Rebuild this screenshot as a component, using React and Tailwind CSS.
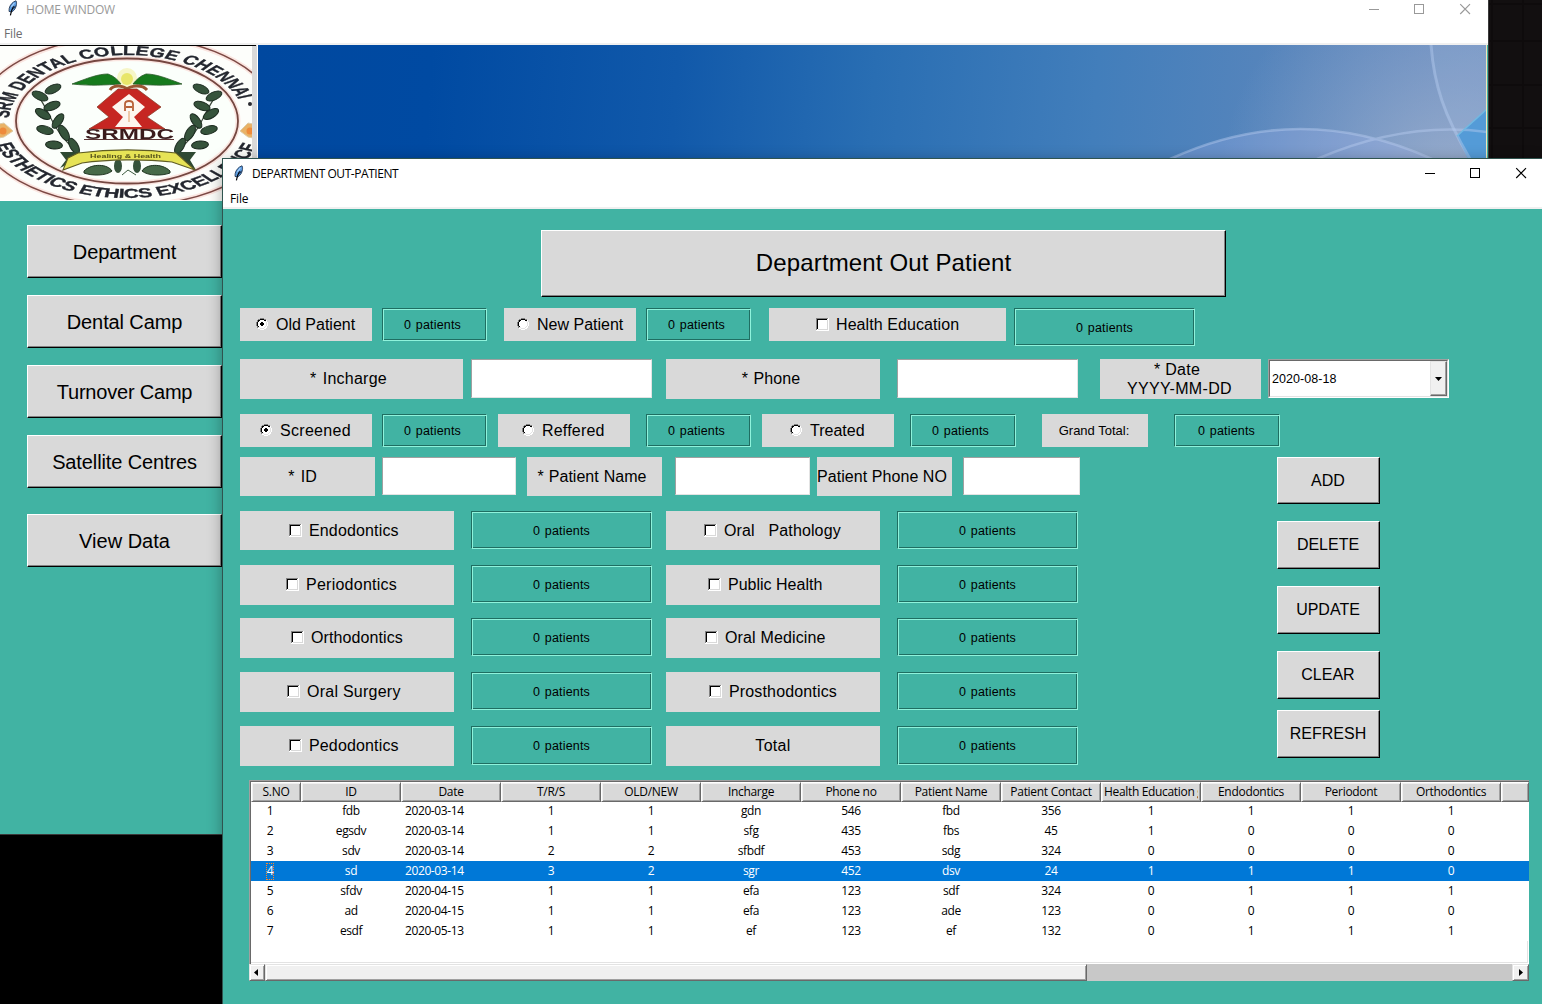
import React from "react";

const ARIAL = "font-['Liberation_Sans',Arial,sans-serif]";
const SEGOE = "font-['Open_Sans','Noto_Sans',sans-serif]";

function Feather() {
  return (
    <svg width="12" height="16" viewBox="0 0 12 16">
      <path d="M9 0.8C6 1.6 2.8 5 2.2 8.4L2 11.4L4.6 12C7.6 10.4 9.2 7.4 9.5 4.4C9.6 2.8 9.6 1.4 9 0.8Z" fill="#5a9be0" stroke="#1b2b45" strokeWidth="0.8" />
      <path d="M6.6 6.4C5.2 8.6 4 11.6 3.4 15.4" fill="none" stroke="#05070c" strokeWidth="1.2" />
      <path d="M6.6 8.6L8.4 5.8" stroke="#15233c" strokeWidth="1" />
      <path d="M4.4 6.8L7.4 2.8" stroke="#a9d2fb" strokeWidth="1.1" />
    </svg>
  );
}

function WindowControls({ color }) {
  return (
    <svg width="104" height="12" viewBox="0 0 104 12" shapeRendering="crispEdges" fill="none" stroke={color}>
      <path d="M0 6.5H10" />
      <rect x="45.5" y="1.5" width="9" height="9" />
      <path d="M91.2 1.2L101 11M101 1.2L91.2 11" shapeRendering="auto" strokeWidth="1.15" />
    </svg>
  );
}

function Emblem() {
  const leaves = [
    [53, 89, -25], [40, 96, 25], [52, 106, -20], [43, 114, 30], [58, 121, -55], [45, 130, 15],
    [64, 133, 60], [54, 145, 5], [74, 146, 60],
  ];
  return (
    <svg width="252" height="154" viewBox="0 46 252 154" className="block bg-[#fdfefb]">
      <defs>
        <path id="arcTop" d="M-66 0A66 66 0 0 1 66 0" />
        <path id="arcBottom" d="M-77 0A77 77 0 0 0 77 0" />
        <filter id="soft"><feGaussianBlur stdDeviation="0.5" /></filter>
      </defs>
      <g filter="url(#soft)">
        <ellipse cx="127" cy="121" rx="152" ry="85" fill="none" stroke="#fbe6e1" strokeWidth="5" />
        <ellipse cx="127" cy="121" rx="152" ry="85" fill="none" stroke="#7d4a45" strokeWidth="1.5" />
        <ellipse cx="127" cy="121" rx="111" ry="62.5" fill="#fbfffb" stroke="#fbe6e1" strokeWidth="5" />
        <ellipse cx="127" cy="121" rx="111" ry="62.5" fill="none" stroke="#744640" strokeWidth="1.8" />
        <g transform="translate(127 121) scale(1.79 1)" className="font-['Liberation_Sans',Arial,sans-serif] font-bold" fill="#23262e" stroke="#23262e" strokeWidth="0.3">
          <text fontSize="13">
            <textPath href="#arcTop" startOffset="3" textLength="182" lengthAdjust="spacingAndGlyphs">SRM DENTAL COLLEGE CHENNAI</textPath>
          </text>
          <text fontSize="13">
            <textPath href="#arcBottom" startOffset="24" textLength="193" lengthAdjust="spacingAndGlyphs">ESTHETICS ETHICS EXCELLENCE</textPath>
          </text>
        </g>
        <circle cx="250" cy="104" r="2" fill="#2a2a30" />
        <path d="M-6 125L4 123L13 131L4 137L-6 139Z M258 125L248 123L240 131L248 137L258 139Z" fill="#e9b266" stroke="#dca" />
        <circle cx="3" cy="131" r="3.5" fill="#ee8a3a" /><circle cx="250" cy="131" r="3.5" fill="#ee8a3a" />
        {[false, true].map((flip) => (
          <g key={String(flip)} transform={flip ? "translate(254 0) scale(-1 1)" : undefined}>
            <path d="M36 93C50 110 52 132 78 152" fill="none" stroke="#3d4a3c" strokeWidth="1.2" />
            {leaves.map(([x, y, r]) => (
              <ellipse key={`${x}-${y}`} cx={x} cy={y} rx="8.5" ry="4" transform={`rotate(${r} ${x} ${y})`} fill="#35523a" stroke="#1c2b20" />
            ))}
          </g>
        ))}
        <circle cx="127" cy="78" r="10" fill="#f6f6c8" /><circle cx="127" cy="79" r="6" fill="#e8e66a" />
        <path d="M72 84C88 78 98 74 108 74C114 76 118 80 121 84C106 85 90 86 72 84Z M182 84C166 78 156 74 146 74C140 76 136 80 133 84C148 85 164 86 182 84Z" fill="#157a1c" stroke="#2f5a2c" strokeWidth="0.8" />
        <path d="M110 90C114 84 124 86 127 89C130 86 142 84 147 90" fill="none" stroke="#9a5730" strokeWidth="3" />
        <path d="M118 89H137L161 107L147 117L165 129H89L109 117L97 107Z" fill="#c62822" stroke="#8d3b2a" strokeWidth="0.8" />
        <path d="M129 94L145 107L134 117L142 127H115L123 117L112 107Z" fill="#fdf6f0" />
        <path d="M125 111V104Q125 101 129 101Q133 101 133 104V111M126 107H132" fill="none" stroke="#b86038" strokeWidth="1.8" />
        <path d="M129 111V122" stroke="#eec9a8" strokeWidth="2" />
        <text x="85" y="138.5" textLength="89" lengthAdjust="spacingAndGlyphs" fontSize="14" className="font-['Liberation_Sans',Arial,sans-serif] font-bold" fill="#3a1c1f">SRMDC</text>
        <path d="M84 139.5H174" stroke="#5b3434" />
        <path d="M84 171C92 163 108 164 112 171C106 176 92 176 84 173Z M170 171C162 163 146 164 142 171C148 176 162 176 170 173Z" fill="#476b49" stroke="#213522" />
        <ellipse cx="118" cy="166" rx="4" ry="7" fill="#36523a" /><ellipse cx="137" cy="166" rx="4" ry="7" fill="#36523a" />
        <path d="M122 175L128 170L136 175" fill="none" stroke="#3d5b40" />
        <path d="M60 152H80L76 160L60 168L66 160ZM196 152H176L180 160L196 170L190 160Z" fill="#2e4a31" />
        <path d="M78 153C110 149 145 149 176 153L195 170L172 162C145 159 108 159 82 163L63 170L68 158Z" fill="#e6e356" stroke="#5f5c24" strokeWidth="1.1" />
        <text x="90" y="157.5" fontSize="5.5" textLength="71" lengthAdjust="spacingAndGlyphs" className="font-['Liberation_Sans',Arial,sans-serif] font-bold" fill="#55521a">Healing &amp; Health</text>
      </g>
    </svg>
  );
}

function Banner() {
  return (
    <svg width="1229" height="114" viewBox="258 45 1229 114" className="block">
      <defs>
        <linearGradient id="sky" gradientUnits="userSpaceOnUse" x1="258" y1="60" x2="1487" y2="150">
          <stop offset="0" stopColor="#00489f" />
          <stop offset="0.14" stopColor="#004aa2" />
          <stop offset="0.34" stopColor="#1159aa" />
          <stop offset="0.5" stopColor="#296eb3" />
          <stop offset="0.68" stopColor="#427ebb" />
          <stop offset="0.85" stopColor="#5a86bc" />
          <stop offset="1" stopColor="#6c8dc0" />
        </linearGradient>
        <radialGradient id="glow" gradientUnits="userSpaceOnUse" cx="1450" cy="185" r="230">
          <stop offset="0" stopColor="#b4bfd2" stopOpacity="0.65" />
          <stop offset="1" stopColor="#a0b4d6" stopOpacity="0" />
        </radialGradient>
      </defs>
      <path d="M258 45H1487V159H258Z" fill="url(#sky)" />
      <path d="M258 45H1487V159H258Z" fill="url(#glow)" />
      <path d="M1170 159Q1300 99 1432 159Z" fill="#9fb4ea" fillOpacity="0.3" />
      <path d="M1431 45C1434 85 1444 115 1457 136L1487 109V45Z" fill="#a9c0e6" fillOpacity="0.15" />
      <path d="M1487 109L1457 136L1468 159H1487Z" fill="#549bd7" />
      <path d="M1170 159Q1300 99 1432 159M1317 159Q1405 121 1487 132" fill="none" stroke="#b8cdf0" strokeOpacity="0.45" strokeWidth="2.5" />
      <path d="M1431 45C1434 85 1444 115 1470 159" fill="none" stroke="#b5cdf0" strokeOpacity="0.45" strokeWidth="3" />
      <path d="M1487 109L1457 136" stroke="#70b9e2" strokeWidth="1.5" />
      <path d="M1486.5 45V159" stroke="#f3e6b8" />
    </svg>
  );
}

function PushButton({ className = "", children }) {
  return (
    <button className={`${ARIAL} flex shrink-0 items-center justify-center whitespace-nowrap border border-t-white border-l-white border-r-black border-b-black bg-[#d9d9d9] text-black shadow-[inset_-1px_-1px_0_#828282] ${className}`}>
      {children}
    </button>
  );
}

function Count({ className = "" }) {
  return (
    <div className={`${ARIAL} flex shrink-0 items-center justify-center whitespace-nowrap border border-t-[#1f6e62] border-l-[#1f6e62] border-r-[#8ff3dc] border-b-[#8ff3dc] text-[12.5px] tracking-[0.18px] [word-spacing:1px] text-black shadow-[inset_1px_1px_0_#8ff3dc,inset_-1px_-1px_0_#1f6e62] ${className}`}>
      0 patients
    </div>
  );
}

function Label({ className = "", children }) {
  return (
    <div className={`${ARIAL} flex shrink-0 items-center justify-center whitespace-pre bg-[#d9d9d9] text-center text-[16px] leading-[19px] text-black ${className}`}>
      {children}
    </div>
  );
}

function Entry({ className = "" }) {
  return <div className={`shrink-0 border border-t-[#a0a0a0] border-l-[#a0a0a0] border-r-[#e3e3e3] border-b-[#e3e3e3] bg-white ${className}`} />;
}

function Radio({ label, on, className = "" }) {
  return (
    <div className={`${ARIAL} flex h-[33px] w-[132px] shrink-0 items-center gap-2 whitespace-nowrap bg-[#d9d9d9] text-[16px] text-black ${className}`}>
      <svg width="12" height="12" viewBox="0 0 12 12" shapeRendering="crispEdges" className="mb-px shrink-0">
        <path d="M4 0H8V1H10V2H11V4H12V8H11V10H10V11H8V12H4V11H2V10H1V8H0V4H1V2H2V1H4Z" fill="#fff" />
        <path d="M4 0H8V1H4ZM2 1H4V2H2ZM8 1H10V2H8ZM1 2H2V4H1ZM0 4H1V8H0ZM1 8H2V10H1Z" fill="#828282" />
        <path d="M4 1H8V2H4ZM2 2H4V3H2ZM8 2H10V3H8ZM2 3H3V4H2ZM1 4H2V8H1ZM2 8H3V9H2Z" fill="#000" />
        <path d="M9 3H10V4H9ZM10 4H11V8H10ZM9 8H10V9H9ZM8 9H9V10H8ZM4 10H8V11H4ZM2 9H4V10H2Z" fill="#e3e3e3" />
        {on && <path d="M5 4H7V5H8V7H7V8H5V7H4V5H5Z" fill="#000" />}
      </svg>
      {label}
    </div>
  );
}

function Check({ label, className = "" }) {
  return (
    <div className={`${ARIAL} flex shrink-0 items-center gap-[7px] whitespace-pre bg-[#d9d9d9] text-[16px] text-black ${className}`}>
      <svg width="13" height="13" viewBox="0 0 13 13" shapeRendering="crispEdges" className="mb-px shrink-0">
        <rect width="13" height="13" fill="#fff" />
        <path d="M0.5 12V0.5H12" fill="none" stroke="#828282" />
        <path d="M1.5 11V1.5H11" fill="none" stroke="#000" />
        <path d="M2 11.5H11.5V2" fill="none" stroke="#d9d9d9" />
      </svg>
      <span>{label}</span>
    </div>
  );
}

const departments = [
  { a: "Endodontics", ap: "pl-[49px] tracking-[0.15px]", b: "Oral   Pathology", bp: "pl-[38px] tracking-[0.13px]", row: "mt-[15px]", h: "h-[39px]", bh: "h-[38px]" },
  { a: "Periodontics", ap: "pl-[46px] tracking-[0.25px]", b: "Public Health", bp: "pl-[42px]", row: "mt-[15px]", h: "h-10", bh: "h-[38px]" },
  { a: "Orthodontics", ap: "pl-[51px] tracking-[0.1px]", b: "Oral Medicine", bp: "pl-[39px] tracking-[0.15px]", row: "mt-[13px]", h: "h-10", bh: "h-[38px]" },
  { a: "Oral Surgery", ap: "pl-[47px] tracking-[0.25px]", b: "Prosthodontics", bp: "pl-[43px] tracking-[0.15px]", row: "mt-[14px]", h: "h-10", bh: "h-[38px]" },
  { a: "Pedodontics", ap: "pl-[49px] tracking-[0.15px]", b: null, bp: "", row: "mt-[14px]", h: "h-10", bh: "h-[39px]" },
];

const columns = ["S.NO", "ID", "Date", "T/R/S", "OLD/NEW", "Incharge", "Phone no", "Patient Name", "Patient Contact", "Health Education g", "Endodontics", "Periodont", "Orthodontics", ""];

const records = [
  ["1", "fdb", "2020-03-14", "1", "1", "gdn", "546", "fbd", "356", "1", "1", "1", "1"],
  ["2", "egsdv", "2020-03-14", "1", "1", "sfg", "435", "fbs", "45", "1", "0", "0", "0"],
  ["3", "sdv", "2020-03-14", "2", "2", "sfbdf", "453", "sdg", "324", "0", "0", "0", "0"],
  ["4", "sd", "2020-03-14", "3", "2", "sgr", "452", "dsv", "24", "1", "1", "1", "0"],
  ["5", "sfdv", "2020-04-15", "1", "1", "efa", "123", "sdf", "324", "0", "1", "1", "1"],
  ["6", "ad", "2020-04-15", "1", "1", "efa", "123", "ade", "123", "0", "0", "0", "0"],
  ["7", "esdf", "2020-05-13", "1", "1", "ef", "123", "ef", "132", "0", "1", "1", "1"],
];

const GRID = "grid grid-cols-[50px_repeat(12,100px)_28px]";

function ScrollArrow({ d, className = "" }) {
  return (
    <div className={`flex h-[17px] shrink-0 items-center justify-center border border-t-[#e3e3e3] border-l-[#e3e3e3] border-r-[#696969] border-b-[#696969] bg-[#f0f0f0] shadow-[inset_1px_1px_0_#fff,inset_-1px_-1px_0_#a0a0a0] ${className}`}>
      <svg width="4" height="7" viewBox="0 0 4 7"><path d={d} fill="#000" /></svg>
    </div>
  );
}

function RecordsTable() {
  return (
    <div className="ml-[9px] mt-[14px] w-[1280px]">
      <div className="h-[184px] border-t border-l border-[#a0a0a0] bg-white">
        <div className={`${SEGOE} h-[183px] overflow-hidden border-t border-l border-[#696969] text-[12px] tracking-[-0.4px] text-black`}>
          <div className={`${GRID} h-[19px]`}>
            {columns.map((c, i) => (
              <div key={i} className="flex border border-t-white border-l-white border-r-[#696969] border-b-[#696969] bg-[#d9d9d9] shadow-[inset_1px_1px_0_#f0f0f0,inset_-1px_-1px_0_#a0a0a0]">
                <div className={`flex flex-1 items-center overflow-hidden whitespace-nowrap ${i === 9 ? "mr-[2px] pl-[2px] tracking-[-0.33px]" : "justify-center tracking-[-0.3px]"}`}>{c}</div>
              </div>
            ))}
          </div>
          {records.map((r, n) => (
            <div key={n} className={`${GRID} h-5 items-center text-center leading-5 ${n === 3 ? "bg-[#0078d7] text-white" : ""}`}>
              {r.map((v, i) => (
                <div key={i} className={i === 0 ? "flex justify-center pr-3" : i === 2 ? "pl-1 text-left" : ""}>
                  {n === 3 && i === 0 ? (
                    <span className="flex h-[17px] w-2 items-center justify-center border border-dotted border-[#ff8728]">{v}</span>
                  ) : v}
                </div>
              ))}
            </div>
          ))}
          <div className="mr-px h-[22px] border-b border-r border-[#e3e3e3]" />
        </div>
      </div>
      <div className="flex h-[17px] bg-[#c8c8c8]">
        <ScrollArrow d="M4 0V7L0 3.5Z" className="w-4 pr-[2px]" />
        <div className="w-[822px] border border-t-[#e3e3e3] border-l-[#e3e3e3] border-r-[#696969] border-b-[#696969] bg-[#f0f0f0] shadow-[inset_1px_1px_0_#fff,inset_-1px_-1px_0_#a0a0a0]" />
        <ScrollArrow d="M0 0V7L4 3.5Z" className="ml-auto w-[17px]" />
      </div>
    </div>
  );
}

function HomeWindow() {
  return (
    <div className="absolute left-0 top-0 flex h-[835px] w-[1489px] flex-col border-r border-b border-[#3a3a3a] bg-[#41b3a3]">
      <div className="flex h-[45px] flex-col border-b-2 border-[#f0f0f0] bg-white">
        <div className={`${SEGOE} flex h-[22px] items-start pl-[7px] text-[12px] text-[#999]`}>
          <Feather />
          <span className="ml-[7px] flex-1 leading-[19px] tracking-[-0.22px]">HOME WINDOW</span>
          <div className="mr-[15px] mt-[3px]"><WindowControls color="#999" /></div>
        </div>
        <div className={`${SEGOE} pl-1 pt-1 text-[12px] leading-[18px] tracking-[-0.15px] text-[#6d6d6d]`}>File</div>
      </div>
      <div className="flex h-[156px]">
        <div className="w-[258px] border-r border-b border-white bg-[#d9d9d9]">
          <div className="w-[256px] border-t border-black"><Emblem /></div>
        </div>
        <Banner />
      </div>
      <div className="ml-[27px] mt-6 flex w-[195px] flex-col gap-[17px] text-[20px] tracking-[-0.12px]">
        <PushButton className="h-[53px]">Department</PushButton>
        <PushButton className="h-[53px]">Dental Camp</PushButton>
        <PushButton className="h-[53px] !tracking-[-0.2px]">Turnover Camp</PushButton>
        <PushButton className="h-[53px]">Satellite Centres</PushButton>
        <PushButton className="mt-[9px] h-[53px] !tracking-normal">View Data</PushButton>
      </div>
    </div>
  );
}

function OutPatientWindow() {
  return (
    <div className="absolute left-[222px] top-[158px] h-[846px] w-[1320px] border-t border-l border-[#30544f] bg-[#41b3a3] shadow-[0_3px_14px_rgba(0,0,0,0.32)]">
      <div className="flex h-[50px] flex-col border-b-2 border-[#f0f0f0] bg-white">
        <div className={`${SEGOE} flex h-[28px] items-start pl-[10px] pt-[6px] text-[12px] text-black`}>
          <Feather />
          <span className="ml-[7px] flex-1 leading-[18px] tracking-[-0.45px]">DEPARTMENT OUT-PATIENT</span>
          <div className="mr-[13px] mt-[2px]"><WindowControls color="#000" /></div>
        </div>
        <div className={`${SEGOE} pl-[7px] pt-[3px] text-[12px] leading-[17px] tracking-[-0.15px] text-black`}>File</div>
      </div>
      <div className="pl-[17px] pt-[21px]">
        <PushButton className="ml-[301px] h-[67px] w-[685px] pb-[2px] text-[24px] tracking-[0.15px]">Department Out Patient</PushButton>
        <div className="mt-[11px] flex h-[38px] items-start">
          <Radio label="Old Patient" on className="pl-4" />
          <Count className="ml-[10px] h-[33px] w-[105px] pr-1 pt-px" />
          <Radio label="New Patient" className="ml-[17px] pl-[13px]" />
          <Count className="ml-[10px] h-[33px] w-[105px] pr-1 pt-px" />
          <Check label="Health Education" className="ml-[18px] h-[33px] w-[237px] pl-[47px] tracking-[0.08px]" />
          <Count className="ml-2 h-[38px] w-[181px] pt-[2px]" />
        </div>
        <div className="mt-[13px] flex h-10 items-start">
          <Label className="h-10 w-[223px] pb-[2px] pr-[6px] tracking-[0.25px] [word-spacing:1.5px]">* Incharge</Label>
          <Entry className="ml-2 h-[39px] w-[181px]" />
          <Label className="ml-[14px] h-10 w-[214px] pb-[2px] pr-[4px] tracking-[0.1px] [word-spacing:1px]">* Phone</Label>
          <Entry className="ml-[17px] h-[39px] w-[181px]" />
          <Label className="ml-[22px] h-10 w-[161px] pr-[2px] tracking-[0.33px]">{"* Date \nYYYY-MM-DD"}</Label>
          <div className="ml-[7px] flex h-[39px] w-[181px] border border-t-[#a0a0a0] border-l-[#a0a0a0] border-r-white border-b-white bg-white">
            <div className="flex flex-1 items-center border border-t-[#696969] border-l-[#696969] border-r-[#e3e3e3] border-b-[#e3e3e3]">
              <span className={`${ARIAL} flex-1 pl-[2px] pt-px text-[12.5px] tracking-[0.05px] text-black`}>2020-08-18</span>
              <div className="flex h-[35px] w-[17px] items-center justify-center border border-t-[#e3e3e3] border-l-[#e3e3e3] border-r-[#696969] border-b-[#696969] bg-[#f0f0f0] shadow-[inset_-1px_-1px_0_#a0a0a0]">
                <svg width="7" height="4" viewBox="0 0 7 4"><path d="M0 0H7L3.5 4Z" fill="#000" /></svg>
              </div>
            </div>
          </div>
        </div>
        <div className="mt-[15px] flex h-[33px]">
          <Radio label="Screened" on className="pl-5 tracking-[0.3px]" />
          <Count className="ml-[10px] w-[105px] pr-1 pt-px" />
          <Radio label="Reffered" className="ml-[11px] pl-6 tracking-[0.2px]" />
          <Count className="ml-4 w-[105px] pr-1 pt-px" />
          <Radio label="Treated" className="ml-[11px] pl-7" />
          <Count className="ml-4 w-[106px] pr-[5px] pt-px" />
          <Label className="ml-[26px] w-[106px] pr-[2px] !text-[13px]">Grand Total:</Label>
          <Count className="ml-[26px] w-[106px] pr-px pt-px" />
        </div>
        <div className="flex pt-[10px]">
          <div className="w-[1037px]">
            <div className="flex h-[39px] items-start">
              <Label className="h-[39px] w-[135px] pr-[10px] [word-spacing:2px]">* ID</Label>
              <Entry className="ml-[7px] h-[38px] w-[134px]" />
              <Label className="ml-[11px] h-[39px] w-[135px] pr-[5px] [word-spacing:0.7px]">* Patient Name</Label>
              <Entry className="ml-[13px] h-[38px] w-[135px]" />
              <Label className="ml-[7px] h-[39px] w-[135px] pr-[5px] tracking-[0.06px]">Patient Phone NO</Label>
              <Entry className="ml-[11px] h-[38px] w-[117px]" />
            </div>
            {departments.map((d) => (
              <div key={d.a} className={`flex items-start ${d.row} ${d.h}`}>
                <Check label={d.a} className={`w-[214px] ${d.h} ${d.ap}`} />
                <Count className={`ml-[17px] w-[181px] pt-[2px] ${d.bh}`} />
                {d.b ? (
                  <Check label={d.b} className={`ml-[14px] w-[214px] ${d.h} ${d.bp}`} />
                ) : (
                  <Label className="ml-[14px] h-10 w-[214px] pb-[2px] tracking-[0.3px]">Total</Label>
                )}
                <Count className={`ml-[17px] w-[181px] pt-[2px] ${d.bh}`} />
              </div>
            ))}
          </div>
          <div className="flex w-[103px] flex-col gap-[17px] text-[16px]">
            <PushButton className="h-[47px] pr-px">ADD</PushButton>
            <PushButton className="h-[48px] pr-px">DELETE</PushButton>
            <PushButton className="h-[48px] pr-px">UPDATE</PushButton>
            <PushButton className="h-[48px] pr-px">CLEAR</PushButton>
            <PushButton className="-mt-[6px] h-[48px] pr-px">REFRESH</PushButton>
          </div>
        </div>
        <RecordsTable />
      </div>
    </div>
  );
}

export default function App() {
  return (
    <div className="relative h-[1004px] w-[1542px] overflow-hidden bg-black">
      <div className="ml-auto h-[158px] w-[54px]">
        <svg width="54" height="158" shapeRendering="crispEdges" className="block bg-[#120f10]">
          <path d="M3.5 0V158M34.5 0V158M0 3.5H54M0 40.5H54M0 84.5H54M0 127.5H54" stroke="#0e0b0c" strokeWidth="2" />
        </svg>
      </div>
      <HomeWindow />
      <OutPatientWindow />
    </div>
  );
}
